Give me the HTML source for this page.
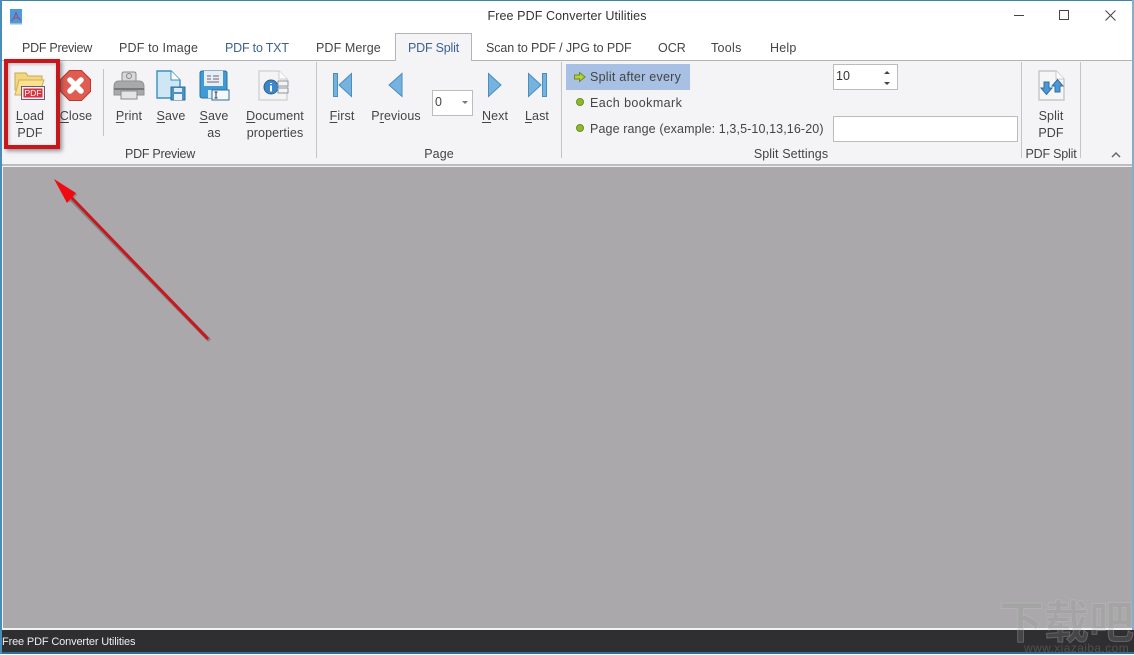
<!DOCTYPE html>
<html><head><meta charset="utf-8">
<style>
html,body{margin:0;padding:0}
body{width:1134px;height:654px;position:relative;overflow:hidden;background:#fff;font-family:"Liberation Sans","Noto Sans CJK SC",sans-serif;font-size:12.5px;color:#444}
.t{position:absolute;white-space:nowrap;line-height:17px;letter-spacing:.1px}
.c{text-align:center}
.b{position:absolute}
svg{position:absolute;overflow:visible}
u{text-decoration-thickness:1px;text-underline-offset:2px}
</style></head><body>
<!-- frame -->
<div class="b" style="left:0;top:0;width:1134px;height:1px;background:#3b85ad"></div>
<div class="b" style="left:0;top:61px;width:1134px;height:103px;background:#f4f4f7"></div>
<div class="b" style="left:0;top:60px;width:1134px;height:1px;background:#b4b4b6"></div>
<div class="b" style="left:0;top:164px;width:1134px;height:2px;background:#bdbdbf"></div>
<div class="b" style="left:2px;top:166px;width:1132px;height:464px;background:#f2f2f2"></div>
<div class="b" style="left:3px;top:167px;width:1129px;height:461px;background:#aaa8aa"></div>
<div class="b" style="left:0;top:630px;width:1134px;height:22px;background:#2f2e30"></div>
<div class="b" style="left:0;top:652px;width:1134px;height:2px;background:#2f6f9c"></div>
<div class="b" style="left:0;top:0;width:2px;height:654px;background:#4a8cb8"></div>
<div class="b" style="left:1132px;top:0;width:2px;height:630px;background:#7fb0cf"></div>

<!-- title bar -->
<svg style="left:10px;top:9px" width="12" height="16"><rect width="12" height="15" fill="#4a9be0"/><rect y="14" width="12" height="1.500" fill="#9fb7c8"/><path d="M6 3C5 7 4 10 1.500 12M6 3C7 7 8.500 10 11 11.500M3 9.500C5 8.800 8 8.800 10 9.500" fill="none" stroke="#a34a6a" stroke-width="1"/></svg>
<div class="t c" style="left:367px;width:400px;top:8px;color:#333">Free PDF Converter Utilities</div>
<svg style="left:1000px;top:0" width="134" height="40" fill="none" stroke="#444" stroke-width="1"><path d="M14 15.500H24"/><rect x="59.500" y="10.500" width="9" height="9"/><path d="M105.500 10.500L115.500 20.500M115.500 10.500L105.500 20.500"/></svg>

<!-- tabs -->
<div class="t" style="left:22px;top:40px;letter-spacing:-.27px">PDF Preview</div>
<div class="t" style="left:119px;top:40px;letter-spacing:.17px">PDF to Image</div>
<div class="t" style="left:225px;top:40px;color:#3d6391;letter-spacing:-.2px">PDF to TXT</div>
<div class="t" style="left:316px;top:40px">PDF Merge</div>
<div class="b" style="left:395px;top:33px;width:77px;height:28px;background:#f4f4f7;border:1px solid #b4b4b6;border-bottom:0;box-sizing:border-box"></div>
<div class="t" style="left:408px;top:40px;color:#3d6391;letter-spacing:-.2px">PDF Split</div>
<div class="t" style="left:486px;top:40px;letter-spacing:-.1px">Scan to PDF / JPG to PDF</div>
<div class="t" style="left:658px;top:40px;letter-spacing:0">OCR</div>
<div class="t" style="left:711px;top:40px;letter-spacing:.3px">Tools</div>
<div class="t" style="left:770px;top:40px;letter-spacing:.2px">Help</div>

<!-- separators -->
<div class="b" style="left:103px;top:69px;width:1px;height:67px;background:#c4c4c6"></div>
<div class="b" style="left:316px;top:62px;width:1px;height:96px;background:#c4c4c6"></div>
<div class="b" style="left:561px;top:62px;width:1px;height:96px;background:#c4c4c6"></div>
<div class="b" style="left:1021px;top:62px;width:1px;height:96px;background:#c4c4c6"></div>
<div class="b" style="left:1080px;top:62px;width:1px;height:96px;background:#c4c4c6"></div>

<!-- Load PDF icon -->
<svg style="left:14px;top:71px" width="32" height="30">
<path d="M1 2h11l2 3h14v14H1z" fill="#f3d77e" stroke="#c9a95a"/>
<path d="M1 24L5 9h25l-5 15H1z" fill="#fbe08e" stroke="#d0ae5c"/>
<rect x="7.500" y="15.500" width="23" height="13" fill="#f0f0f4" stroke="#6b5878"/>
<rect x="9.500" y="17.500" width="19" height="9" fill="#d8333f"/>
<text x="19" y="25" font-size="8.500" font-family="Liberation Sans" fill="#fff" text-anchor="middle">PDF</text>
</svg>
<!-- Close icon -->
<svg style="left:60px;top:70px" width="32" height="32">
<path d="M9.500 .5h12l9 9v12l-9 9h-12l-9-9v-12z" fill="#e05c50" stroke="#b8392f"/>
<path d="M10 10L21 21M21 10L10 21" stroke="#fff" stroke-width="5.500" stroke-linecap="round"/>
</svg>
<!-- Print -->
<svg style="left:113px;top:71px" width="32" height="29">
<path d="M9 10V3q0-2 2-2h10q2 0 2 2v7" fill="#d8d8d8" stroke="#8a8a8a"/>
<circle cx="16" cy="5" r="2.500" fill="none" stroke="#888"/>
<path d="M1 16q0-6 5-6h20q5 0 5 6v8H1z" fill="#a8a9ab" stroke="#929294"/>
<rect x="1" y="17" width="30" height="2" fill="#77787a"/>
<rect x="8" y="20" width="16" height="8" fill="#e4e4e4" stroke="#8a8a8a"/>
</svg>
<!-- Save -->
<svg style="left:156px;top:70px" width="30" height="30">
<path d="M1 1h14l9 9v18H1z" fill="#cfe6f4" stroke="#3d8fc0" stroke-width="1.400"/>
<path d="M15 1v9h9" fill="#fff" stroke="#3d8fc0"/>
<rect x="15" y="17" width="14" height="13" fill="#4a93c4" stroke="#2c6e9b"/>
<rect x="18" y="18" width="8" height="4" fill="#dbeaf4"/><rect x="18" y="24" width="8" height="6" fill="#eaf2f8"/>
</svg>
<!-- Save as -->
<svg style="left:199px;top:70px" width="31" height="30">
<rect x="1" y="1" width="27" height="27" rx="2" fill="#3f9bd6" stroke="#2b6f9e"/>
<rect x="5" y="1" width="19" height="15" fill="#e8eef2"/>
<path d="M8 6h4m2 0h6M8 9h4m2 0h6M8 12h12" stroke="#667" stroke-width="1"/>
<rect x="9" y="20" width="11" height="8" fill="#dbe8f0"/>
<rect x="13" y="20" width="17" height="10" fill="#f6f9fb" stroke="#2b6f9e"/>
<path d="M17 22v6M15.500 22h3M15.500 28h3" stroke="#333" stroke-width="1"/>
</svg>
<!-- Doc props -->
<svg style="left:258px;top:70px" width="32" height="31">
<path d="M1 1h20l8 8v21H1z" fill="#f4f4f4" stroke="#cfcfcf" stroke-width="1.300"/>
<path d="M21 1v8h8" fill="#fff" stroke="#ccc"/>
<circle cx="13" cy="17" r="7" fill="#3f86c8" stroke="#2a6296"/>
<path d="M13 13v1M13 15.500v6" stroke="#fff" stroke-width="2"/>
<rect x="20" y="11" width="10" height="5" fill="#f4f4f4" stroke="#8a96a0"/><rect x="20" y="18" width="10" height="5" fill="#f4f4f4" stroke="#8a96a0"/>
</svg>
<div class="t c" style="left:5px;width:50px;top:108px"><u>L</u>oad</div>
<div class="t c" style="left:5px;width:50px;top:125px">PDF</div>
<div class="t c" style="left:56px;width:40px;top:108px"><u>C</u>lose</div>
<div class="t c" style="left:109px;width:40px;top:108px"><u>P</u>rint</div>
<div class="t c" style="left:151px;width:40px;top:108px"><u>S</u>ave</div>
<div class="t c" style="left:194px;width:40px;top:108px"><u>S</u>ave</div>
<div class="t c" style="left:194px;width:40px;top:125px">as</div>
<div class="t c" style="left:235px;width:80px;top:108px"><u>D</u>ocument</div>
<div class="t c" style="left:235px;width:80px;top:125px">properties</div>
<div class="t c" style="left:90px;width:140px;top:146px;letter-spacing:-.27px">PDF Preview</div>

<!-- Red highlight -->
<div class="b" style="left:4px;top:59px;width:56px;height:90px;box-sizing:border-box;border:4px solid #c8161d;box-shadow:2px 2px 4px rgba(60,60,60,.55),inset 1px 1px 3px rgba(60,60,60,.35)"></div>

<!-- Page nav icons -->
<svg style="left:330px;top:72px" width="24" height="28" stroke="#4d8dbc" fill="#74b2df">
<rect x="3.500" y="1.500" width="4" height="23"/><path d="M21.500 1.500v23L9 13z"/></svg>
<svg style="left:387px;top:72px" width="18" height="28" stroke="#4d8dbc" fill="#74b2df"><path d="M15 1.500v23L2 13z"/></svg>
<svg style="left:486px;top:72px" width="18" height="28" stroke="#4d8dbc" fill="#74b2df"><path d="M2.500 1.500v23L15 13z"/></svg>
<svg style="left:526px;top:72px" width="24" height="28" stroke="#4d8dbc" fill="#74b2df">
<path d="M2.500 1.500v23L15 13z"/><rect x="16.500" y="1.500" width="4" height="23"/></svg>
<div class="t c" style="left:322px;width:40px;top:108px"><u>F</u>irst</div>
<div class="t c" style="left:366px;width:60px;top:108px">P<u>r</u>evious</div>
<div class="t c" style="left:475px;width:40px;top:108px"><u>N</u>ext</div>
<div class="t c" style="left:517px;width:40px;top:108px"><u>L</u>ast</div>
<div class="b" style="left:432px;top:90px;width:41px;height:26px;box-sizing:border-box;background:#fff;border:1px solid #bcbcbc"></div>
<div class="t" style="left:435px;top:94px">0</div>
<svg style="left:462px;top:101px" width="6" height="4"><path d="M0 0h6L3 3z" fill="#777"/></svg>
<div class="t c" style="left:399px;width:80px;top:146px">Page</div>

<!-- Split settings -->
<div class="b" style="left:566px;top:64px;width:124px;height:26px;background:#a7c0e3"></div>
<svg style="left:574px;top:72px" width="12" height="10"><path d="M.5 3h5V.5L11 5 5.500 9.500V7h-5z" fill="#b5d334" stroke="#6c8a1e"/></svg>
<svg style="left:576px;top:98px" width="8" height="8"><circle cx="4" cy="4" r="3.500" fill="#8dba2c" stroke="#6c8f22"/></svg>
<svg style="left:576px;top:124px" width="8" height="8"><circle cx="4" cy="4" r="3.500" fill="#8dba2c" stroke="#6c8f22"/></svg>
<div class="t" style="left:590px;top:69px;letter-spacing:.25px">Split after every</div>
<div class="t" style="left:590px;top:95px;letter-spacing:.42px">Each bookmark</div>
<div class="t" style="left:590px;top:121px;letter-spacing:.11px">Page range (example: 1,3,5-10,13,16-20)</div>
<div class="b" style="left:833px;top:64px;width:65px;height:26px;box-sizing:border-box;background:#fff;border:1px solid #bcbcbc"></div>
<div class="t" style="left:836px;top:68px;color:#333">10</div>
<svg style="left:883px;top:70px" width="8" height="16"><path d="M1 4L4 1l3 3zM1 12h6l-3 3z" fill="#444"/></svg>
<div class="b" style="left:833px;top:116px;width:185px;height:26px;box-sizing:border-box;background:#fff;border:1px solid #bcbcbc"></div>
<div class="t c" style="left:711px;width:160px;top:146px">Split Settings</div>

<!-- Split PDF -->
<svg style="left:1038px;top:70px" width="27" height="32">
<path d="M1 1h17l8 8v21H1z" fill="#f6f6f6" stroke="#c6c6c6" stroke-width="1.400"/>
<path d="M18 1v8h8" fill="#fff" stroke="#c6c6c6"/>
<path d="M6 12h5v6h3l-5.500 6.500L3 18h3z" fill="#4a98d6" stroke="#2f6fa4"/>
<path d="M17 22v-6h-3l5.500-6.500L25 16h-3v6z" fill="#4a98d6" stroke="#2f6fa4"/>
</svg>
<div class="t c" style="left:1021px;width:60px;top:108px">Split</div>
<div class="t c" style="left:1021px;width:60px;top:125px">PDF</div>
<div class="t c" style="left:1021px;width:60px;top:146px;letter-spacing:-.2px">PDF Split</div>
<svg style="left:1111px;top:151px" width="10" height="7" fill="none" stroke="#666" stroke-width="1.500"><path d="M1 6l4-4 4 4"/></svg>

<!-- Arrow -->
<svg style="left:0;top:160px" width="230" height="190">
<line x1="208" y1="179" x2="70" y2="38" stroke="#555" stroke-opacity=".45" stroke-width="4" transform="translate(1.500 1.500)"/>
<path d="M54 20L76 33 68 41z" fill="#555" fill-opacity=".35" transform="translate(1.500 1.500)"/>
<line x1="208" y1="179" x2="70" y2="36" stroke="#c8181e" stroke-width="3"/>
<path d="M54 19L76 33 67 43z" fill="#f00a12"/>
</svg>

<!-- Status bar -->
<div class="t" style="left:2px;top:634px;color:#eee;font-size:11px;letter-spacing:-.15px">Free PDF Converter Utilities</div>

<!-- Watermark -->
<div class="t" style="left:999px;top:594px;font-size:45px;line-height:50px;letter-spacing:0;color:rgba(150,150,150,.22);-webkit-text-stroke:1px rgba(205,205,205,.28);font-family:'Noto Sans CJK SC','Liberation Sans',sans-serif;font-weight:700">下载吧</div>
<div class="t" style="left:1024px;top:642px;font-size:12px;line-height:12px;letter-spacing:.4px;color:rgba(130,130,130,.4)">www.xiazaiba.com</div>
</body></html>
